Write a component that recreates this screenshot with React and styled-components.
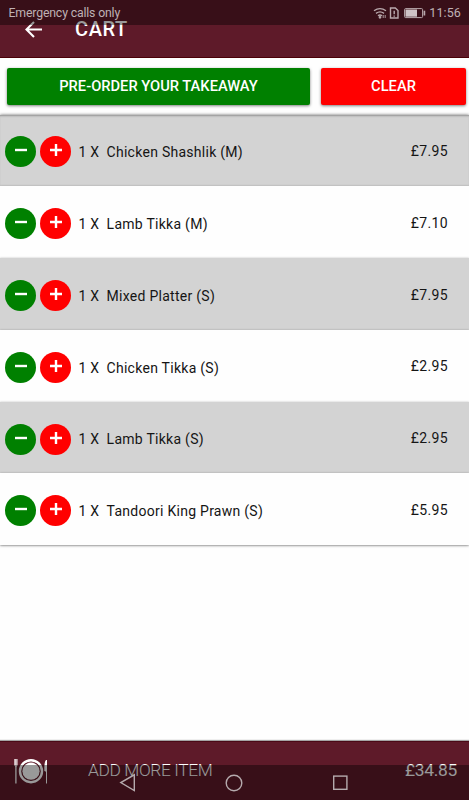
import React from 'react';
import styled, { createGlobalStyle } from 'styled-components';

const GlobalStyle = createGlobalStyle`
  * { box-sizing: border-box; }
  body { margin: 0; background: #fefefe; font-family: Roboto, sans-serif; }
  button { font: inherit; border: 0; padding: 0; }
`;

const Screen = styled.div`
  position: relative;
  display: flex;
  flex-direction: column;
  width: 469px;
  height: 800px;
  overflow: hidden;
  background: #fefefe;
`;

const StatusBar = styled.div`
  position: absolute;
  inset: 0 0 auto 0;
  z-index: 2;
  height: 25px;
  padding: 0 8px 0 8.5px;
  display: flex;
  align-items: center;
  justify-content: space-between;
  background: rgba(0, 0, 0, 0.4);
  color: #bfb1b4;
  font-size: 12.3px;
  line-height: 26px;
`;

const Carrier = styled.span`
  letter-spacing: -0.17px;
  padding-top: 1px;
`;

const StatusIcons = styled.div`
  display: flex;
  align-items: center;
  padding-top: 1px;
`;

const Clock = styled.span`
  margin-left: 3px;
  font-size: 12.5px;
  letter-spacing: 0.1px;
`;

const Header = styled.header`
  flex: none;
  height: 58px;
  display: flex;
  align-items: flex-start;
  padding: 17px 0 0 21px;
  background: #5e1a29;
  border-bottom: 1px solid #4b0007;
  color: #fff;
`;

const Title = styled.h1`
  margin: 0 0 0 30px;
  font-size: 20px;
  line-height: 24px;
  font-weight: 500;
  letter-spacing: 0.6px;
`;

const Actions = styled.div`
  flex: none;
  height: 56.5px;
  display: grid;
  grid-template-columns: 303px 145px;
  column-gap: 11px;
  padding: 10px 0 0 7px;
`;

const ActionButton = styled.button`
  height: 37px;
  border-radius: 2px;
  background: ${(p) => p.$color};
  color: #fff;
  font-size: 14.7px;
  font-weight: 500;
  line-height: 37px;
  box-shadow: 0 1px 3px rgba(0, 0, 0, 0.5);
`;

const List = styled.ul`
  flex: none;
  margin: 0;
  padding: 0;
  list-style: none;
  box-shadow: 0 0 3px rgba(0, 0, 0, 0.6);
`;

const Row = styled.li`
  height: 71.8px;
  display: flex;
  align-items: center;
  padding: 3px 21px 0 5.3px;
  background: ${(p) => (p.$shaded ? '#d3d3d3' : '#fefefe')};
  box-shadow: 0 0 2px rgba(0, 0, 0, 0.25);
  color: #151515;
  font-size: 14px;

  &:first-child {
    box-shadow: inset 0 2px 2px -1px rgba(0, 0, 0, 0.3);
  }
`;

const RoundButton = styled.button`
  width: 31px;
  height: 31px;
  margin-right: 3.4px;
  border-radius: 50%;
  background: ${(p) => p.$color};
  display: grid;
  place-items: center;
  padding: 0 0 3px 1px;
`;

const Quantity = styled.span`
  width: 28px;
  margin-left: 4.5px;
  padding-top: 0.6px;
  letter-spacing: 0.15px;
`;

const ItemName = styled.span`
  flex: 1;
  padding-top: 0.6px;
  letter-spacing: 0.27px;
`;

const Price = styled.span`
  padding-bottom: 1.6px;
  letter-spacing: 0.35px;
`;

const Footer = styled.footer`
  flex: none;
  height: 59px;
  margin-top: auto;
  display: flex;
  align-items: flex-start;
  padding: 16px 12px 0 14px;
  background: #5e1a29;
  border-top: 1px solid #4b0a17;
  box-shadow: 0 -1px 1px rgba(0, 0, 0, 0.35);
  color: #fff;
  font-size: 17.4px;
  line-height: 25px;
`;

const AddMore = styled.span`
  flex: 1;
  margin-left: 40px;
  font-weight: 300;
  letter-spacing: -0.4px;
`;

const Total = styled.span`
  font-weight: 400;
  letter-spacing: -0.3px;
`;

const NavBar = styled.nav`
  position: absolute;
  inset: auto 0 0 0;
  z-index: 2;
  height: 35px;
  padding: 0 121px 0 119px;
  display: flex;
  align-items: center;
  justify-content: space-between;
  background: rgba(0, 0, 0, 0.4);
`;

const BackArrow = () => (
  <svg width="24" height="24" viewBox="0 0 24 24" fill="none" stroke="#fff" strokeWidth="2.1">
    <path d="M21 12.5H6M13 5L5.5 12.5 13 20" />
  </svg>
);

const Sign = ({ plus }) => (
  <svg width="14" height="14" viewBox="0 0 14 14" stroke="#fff" strokeWidth="2.4">
    <path d={plus ? 'M1 7H13M7 1V13' : 'M1 7H13'} />
  </svg>
);

const SignalIcons = () => (
  <svg width="53" height="14" viewBox="0 0 53 14" fill="none" stroke="#b9a9ad" strokeWidth="1.4">
    <path d="M1 4.8Q7 .5 13 4.8M3 7.4Q7 4.3 11 7.4M5 9.7Q7 8.2 9 9.7" />
    <circle cx="7" cy="11.3" r=".7" fill="#b9a9ad" />
    <path d="M10.2 9v3M12.2 9v3" strokeWidth=".9" />
    <path d="M17.5 2h4.8L25 4.6V12h-7.5zM21.2 4.7v3.6M21.2 9.4v1.3" />
    <rect x="31.6" y="2.6" width="18" height="9" rx="1" strokeWidth="1" />
    <rect x="32.5" y="3.5" width="11.5" height="7.2" fill="#cfc3c6" stroke="none" />
    <path d="M51.4 4.7v4.8" strokeWidth="1.7" />
  </svg>
);

const PlateIcon = () => (
  <svg width="34" height="28" viewBox="0 0 34 28" fill="none" stroke="#fff">
    <circle cx="17" cy="13.2" r="11" strokeWidth="2.4" />
    <circle cx="17" cy="13.2" r="8.6" fill="#fff" stroke="none" />
    <path d="M.7 1v6q0 1.3 1.2 1.3T3.1 7V1" strokeWidth=".8" />
    <path d="M1.9 1v24.5" strokeWidth="1.3" />
    <path d="M32.5 25.5V2q-2 1.8-1.6 11h1.6" fill="#fff" strokeWidth="1" />
  </svg>
);

const NavBack = () => (
  <svg width="17" height="20" viewBox="0 0 17 20" fill="none" stroke="#b5aaad" strokeWidth="1.4">
    <path d="M15.3 1.8v15.7L1.8 9.6z" />
  </svg>
);

const NavHome = () => (
  <svg width="18" height="18" viewBox="0 0 18 18" fill="none" stroke="#b5aaad" strokeWidth="1.4">
    <circle cx="9" cy="9" r="7.8" />
  </svg>
);

const NavRecent = () => (
  <svg width="16" height="16" viewBox="0 0 16 16" fill="none" stroke="#b5aaad" strokeWidth="1.4">
    <rect x="1.7" y="1.1" width="13.2" height="13.2" />
  </svg>
);

const items = [
  ['Chicken Shashlik (M)', '£7.95'],
  ['Lamb Tikka (M)', '£7.10'],
  ['Mixed Platter (S)', '£7.95'],
  ['Chicken Tikka (S)', '£2.95'],
  ['Lamb Tikka (S)', '£2.95'],
  ['Tandoori King Prawn (S)', '£5.95'],
];

export default function App() {
  return (
    <Screen>
      <GlobalStyle />
      <StatusBar>
        <Carrier>Emergency calls only</Carrier>
        <StatusIcons>
          <SignalIcons />
          <Clock>11:56</Clock>
        </StatusIcons>
      </StatusBar>
      <Header>
        <BackArrow />
        <Title>CART</Title>
      </Header>
      <Actions>
        <ActionButton $color="#008000">PRE-ORDER YOUR TAKEAWAY</ActionButton>
        <ActionButton $color="#ff0000">CLEAR</ActionButton>
      </Actions>
      <List>
        {items.map(([name, price], i) => (
          <Row key={name} $shaded={i % 2 === 0}>
            <RoundButton $color="#008000" aria-label="Remove one"><Sign /></RoundButton>
            <RoundButton $color="#ff0000" aria-label="Add one"><Sign plus /></RoundButton>
            <Quantity>1 X</Quantity>
            <ItemName>{name}</ItemName>
            <Price>{price}</Price>
          </Row>
        ))}
      </List>
      <Footer>
        <PlateIcon />
        <AddMore>ADD MORE ITEM</AddMore>
        <Total>£34.85</Total>
      </Footer>
      <NavBar>
        <NavBack />
        <NavHome />
        <NavRecent />
      </NavBar>
    </Screen>
  );
}
